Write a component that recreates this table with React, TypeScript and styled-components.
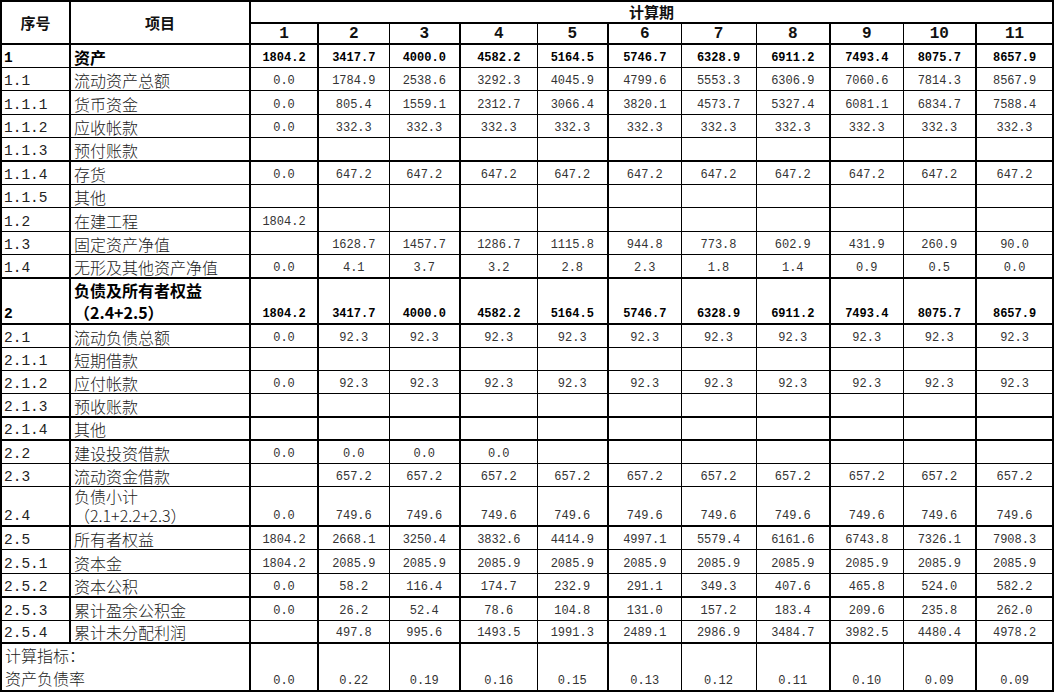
import styled, { createGlobalStyle } from 'styled-components';

const GlobalStyle = createGlobalStyle`
  html, body {
    margin: 0;
    padding: 0;
    background: #fff;
  }
  body {
    font-family: "Liberation Mono", "Noto Sans CJK SC", monospace;
    color: #111;
  }
`;

type RowData = {
  no: string;
  item: string[];
  values: string[];
  bold?: boolean;
  height: number;
  lh?: number;
  thick?: boolean;
  merged?: boolean;
};

const E = '';
const rep = (first: string, v: string) => [first, ...Array(10).fill(v)];

const ROWS: RowData[] = [
  { no: '1', item: ['资产'], bold: true, height: 23.4, values: ['1804.2', '3417.7', '4000.0', '4582.2', '5164.5', '5746.7', '6328.9', '6911.2', '7493.4', '8075.7', '8657.9'] },
  { no: '1.1', item: ['流动资产总额'], height: 23.4, values: ['0.0', '1784.9', '2538.6', '3292.3', '4045.9', '4799.6', '5553.3', '6306.9', '7060.6', '7814.3', '8567.9'] },
  { no: '1.1.1', item: ['货币资金'], height: 23.4, values: ['0.0', '805.4', '1559.1', '2312.7', '3066.4', '3820.1', '4573.7', '5327.4', '6081.1', '6834.7', '7588.4'] },
  { no: '1.1.2', item: ['应收帐款'], height: 23.4, values: rep('0.0', '332.3') },
  { no: '1.1.3', item: ['预付账款'], height: 23.4, thick: true, values: rep(E, E) },
  { no: '1.1.4', item: ['存货'], height: 23.4, values: rep('0.0', '647.2') },
  { no: '1.1.5', item: ['其他'], height: 23.4, values: rep(E, E) },
  { no: '1.2', item: ['在建工程'], height: 23.4, values: rep('1804.2', E) },
  { no: '1.3', item: ['固定资产净值'], height: 23.4, values: [E, '1628.7', '1457.7', '1286.7', '1115.8', '944.8', '773.8', '602.9', '431.9', '260.9', '90.0'] },
  { no: '1.4', item: ['无形及其他资产净值'], height: 23.4, thick: true, values: ['0.0', '4.1', '3.7', '3.2', '2.8', '2.3', '1.8', '1.4', '0.9', '0.5', '0.0'] },
  { no: '2', item: ['负债及所有者权益', '（2.4+2.5）'], bold: true, height: 45, lh: 22, thick: true, values: ['1804.2', '3417.7', '4000.0', '4582.2', '5164.5', '5746.7', '6328.9', '6911.2', '7493.4', '8075.7', '8657.9'] },
  { no: '2.1', item: ['流动负债总额'], height: 23.3, values: rep('0.0', '92.3') },
  { no: '2.1.1', item: ['短期借款'], height: 23.3, values: rep(E, E) },
  { no: '2.1.2', item: ['应付帐款'], height: 23.3, values: rep('0.0', '92.3') },
  { no: '2.1.3', item: ['预收账款'], height: 23.3, thick: true, values: rep(E, E) },
  { no: '2.1.4', item: ['其他'], height: 23.3, thick: true, values: rep(E, E) },
  { no: '2.2', item: ['建设投资借款'], height: 23.3, values: ['0.0', '0.0', '0.0', '0.0', E, E, E, E, E, E, E] },
  { no: '2.3', item: ['流动资金借款'], height: 23.3, values: rep(E, '657.2') },
  { no: '2.4', item: ['负债小计', '（2.1+2.2+2.3）'], height: 39, lh: 19, thick: true, values: rep('0.0', '749.6') },
  { no: '2.5', item: ['所有者权益'], height: 23.4, values: ['1804.2', '2668.1', '3250.4', '3832.6', '4414.9', '4997.1', '5579.4', '6161.6', '6743.8', '7326.1', '7908.3'] },
  { no: '2.5.1', item: ['资本金'], height: 23.4, values: rep('1804.2', '2085.9') },
  { no: '2.5.2', item: ['资本公积'], height: 23.4, thick: true, values: ['0.0', '58.2', '116.4', '174.7', '232.9', '291.1', '349.3', '407.6', '465.8', '524.0', '582.2'] },
  { no: '2.5.3', item: ['累计盈余公积金'], height: 23.4, values: ['0.0', '26.2', '52.4', '78.6', '104.8', '131.0', '157.2', '183.4', '209.6', '235.8', '262.0'] },
  { no: '2.5.4', item: ['累计未分配利润'], height: 23.4, thick: true, values: [E, '497.8', '995.6', '1493.5', '1991.3', '2489.1', '2986.9', '3484.7', '3982.5', '4480.4', '4978.2'] },
  { no: '', item: ['计算指标：', '资产负债率'], height: 48, lh: 23, merged: true, values: ['0.0', '0.22', '0.19', '0.16', '0.15', '0.13', '0.12', '0.11', '0.10', '0.09', '0.09'] },
];

const WIDTHS = [69, 180, 68, 71, 71, 77, 71, 73, 75, 74, 73, 73, 77];
// columns whose left rule is drawn heavy
const THICK_LEFT = new Set([1, 2, 3, 5, 7, 10, 12]);

const Sheet = styled.table`
  border-collapse: collapse;
  table-layout: fixed;
  width: 1052px;
  border: 2px solid #000;
`;

const Row = styled.tr<{ $h: number }>`
  height: ${(p) => p.$h}px;
`;

const Cell = styled.td<{ $thickL?: boolean; $thickB?: boolean }>`
  padding: 0;
  border-top: 1px solid #000;
  border-right: 1px solid #000;
  border-left: ${(p) => (p.$thickL ? 2 : 1)}px solid #000;
  border-bottom: ${(p) => (p.$thickB ? 2 : 1)}px solid #000;
  vertical-align: bottom;
  white-space: nowrap;
`;

const HeadCell = styled(Cell).attrs({ as: 'th' })<{ $top?: boolean }>`
  font-family: "Noto Sans CJK SC", sans-serif;
  font-weight: 700;
  font-size: 15px;
  line-height: 20px;
  text-align: center;
  vertical-align: ${(p) => (p.$top ? 'top' : 'middle')};
`;

const PeriodNo = styled(Cell).attrs({ as: 'th' })`
  font-family: "Liberation Mono", monospace;
  font-weight: 700;
  font-size: 16px;
  line-height: 18px;
  text-align: center;
  vertical-align: bottom;
`;

const NoCell = styled(Cell)<{ $bold?: boolean }>`
  font-family: "Liberation Mono", monospace;
  font-size: 14.5px;
  font-weight: ${(p) => (p.$bold ? 700 : 400)};
  line-height: 17px;
  padding-left: 2px;
  color: ${(p) => (p.$bold ? '#000' : '#222')};
`;

const ItemCell = styled(Cell)<{ $bold?: boolean }>`
  font-family: "Noto Sans CJK SC", sans-serif;
  font-size: 16px;
  font-weight: ${(p) => (p.$bold ? 700 : 300)};
  line-height: 19px;
  padding-left: 3px;
  color: ${(p) => (p.$bold ? '#000' : '#222')};
`;

const Line = styled.div<{ $lh: number }>`
  line-height: ${(p) => p.$lh}px;
`;

const ValueCell = styled(Cell)<{ $bold?: boolean }>`
  font-family: "Liberation Mono", monospace;
  font-size: 12px;
  font-weight: ${(p) => (p.$bold ? 700 : 400)};
  line-height: 17px;
  text-align: center;
  color: ${(p) => (p.$bold ? '#000' : '#333')};
`;

export default function App() {
  return (
    <>
      <GlobalStyle />
      <Sheet>
        <colgroup>
          {WIDTHS.map((w, i) => (
            <col key={i} style={{ width: w }} />
          ))}
        </colgroup>
        <thead>
          <Row $h={21}>
            <HeadCell rowSpan={2} $thickB>序号</HeadCell>
            <HeadCell rowSpan={2} $thickL $thickB>项目</HeadCell>
            <HeadCell colSpan={11} $thickL $thickB $top>计算期</HeadCell>
          </Row>
          <Row $h={21}>
            {WIDTHS.slice(2).map((_, i) => (
              <PeriodNo key={i} $thickL={THICK_LEFT.has(i + 2)} $thickB>
                {i + 1}
              </PeriodNo>
            ))}
          </Row>
        </thead>
        <tbody>
          {ROWS.map((r, ri) => (
            <Row key={ri} $h={r.height}>
              {r.merged ? (
                <ItemCell colSpan={2} $thickB={r.thick}>
                  {r.item.map((t, k) => (
                    <Line key={k} $lh={r.lh ?? 20}>{t}</Line>
                  ))}
                </ItemCell>
              ) : (
                <>
                  <NoCell $bold={r.bold} $thickB={r.thick}>{r.no}</NoCell>
                  <ItemCell $bold={r.bold} $thickL $thickB={r.thick}>
                    {r.item.length > 1
                      ? r.item.map((t, k) => <Line key={k} $lh={r.lh ?? 20}>{t}</Line>)
                      : r.item[0]}
                  </ItemCell>
                </>
              )}
              {r.values.map((v, i) => (
                <ValueCell key={i} $bold={r.bold} $thickL={THICK_LEFT.has(i + 2)} $thickB={r.thick}>
                  {v}
                </ValueCell>
              ))}
            </Row>
          ))}
        </tbody>
      </Sheet>
    </>
  );
}
